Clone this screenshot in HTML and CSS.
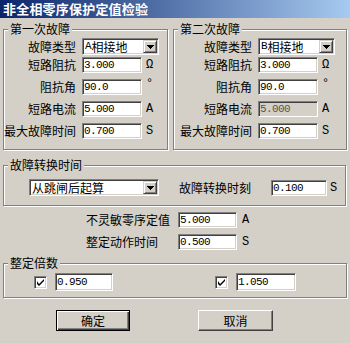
FILE: index.html
```html
<!DOCTYPE html>
<html lang="zh-CN">
<head>
<meta charset="utf-8">
<title>非全相零序保护定值检验</title>
<link rel="stylesheet" href="styles.css">
</head>
<body>
<div class="titlebar">非全相零序保护定值检验</div>

<div class="top">
  <fieldset class="group g1">
    <legend>第一次故障</legend>
    <div class="rows">
      <div class="row first">
        <span class="lbl">故障类型</span>
        <div class="combo"><span class="ctext"><span class="mono">A</span>相接地</span><span class="cbtn"><svg width="7" height="4" viewBox="0 0 7 4"><path d="M0 0h7L3.5 4z"/></svg></span></div>
      </div>
      <div class="row"><span class="lbl">短路阻抗</span><span class="edit">3.000</span><span class="unit">Ω</span></div>
      <div class="row"><span class="lbl">阻抗角</span><span class="edit">90.0</span><span class="unit deg">°</span></div>
      <div class="row"><span class="lbl">短路电流</span><span class="edit">5.000</span><span class="unit">A</span></div>
      <div class="row"><span class="lbl">最大故障时间</span><span class="edit">0.700</span><span class="unit">S</span></div>
    </div>
  </fieldset>

  <fieldset class="group g2">
    <legend>第二次故障</legend>
    <div class="rows">
      <div class="row first">
        <span class="lbl">故障类型</span>
        <div class="combo"><span class="ctext"><span class="mono">B</span>相接地</span><span class="cbtn"><svg width="7" height="4" viewBox="0 0 7 4"><path d="M0 0h7L3.5 4z"/></svg></span></div>
      </div>
      <div class="row"><span class="lbl">短路阻抗</span><span class="edit">3.000</span><span class="unit">Ω</span></div>
      <div class="row"><span class="lbl">阻抗角</span><span class="edit">90.0</span><span class="unit deg">°</span></div>
      <div class="row"><span class="lbl">短路电流</span><span class="edit disabled">5.000</span><span class="unit">A</span></div>
      <div class="row"><span class="lbl">最大故障时间</span><span class="edit">0.700</span><span class="unit">S</span></div>
    </div>
  </fieldset>
</div>

<fieldset class="group g3">
  <legend>故障转换时间</legend>
  <div class="line">
    <div class="combo wide"><span class="ctext">从跳闸后起算</span><span class="cbtn"><svg width="7" height="4" viewBox="0 0 7 4"><path d="M0 0h7L3.5 4z"/></svg></span></div>
    <span class="lbl3">故障转换时刻</span>
    <span class="edit e56">0.100</span><span class="unit u3">S</span>
  </div>
</fieldset>

<div class="plain">
  <div class="prow"><span class="plbl">不灵敏零序定值</span><span class="edit e59">5.000</span><span class="unit u5">A</span></div>
  <div class="prow"><span class="plbl">整定动作时间</span><span class="edit e59">0.500</span><span class="unit u5">S</span></div>
</div>

<fieldset class="group g4">
  <legend>整定倍数</legend>
  <div class="line">
    <span class="chk"><svg width="7" height="7" viewBox="0 0 7 7"><path d="M0 2v3l2 2 5-5V0L2 5z"/></svg></span>
    <span class="edit tall e58">0.950</span>
    <span class="chk c2"><svg width="7" height="7" viewBox="0 0 7 7"><path d="M0 2v3l2 2 5-5V0L2 5z"/></svg></span>
    <span class="edit tall e60">1.050</span>
  </div>
</fieldset>

<div class="buttons">
  <button class="btn default">确定</button>
  <button class="btn cancel">取消</button>
</div>
</body>
</html>
```

FILE: styles.css
```css
* { box-sizing: border-box; }
html, body { margin: 0; padding: 0; }
body {
  width: 350px;
  height: 343px;
  overflow: hidden;
  background: #d4d0c8;
  font-family: "Noto Sans CJK SC", "Noto Sans CJK JP", sans-serif;
  font-size: 12px;
  line-height: 14px;
  color: #000;
}

.titlebar {
  height: 18px;
  line-height: 18px;
  padding-left: 3px;
  color: #fff;
  font-weight: bold;
  font-size: 13px;
  letter-spacing: 0.2px;
  background: linear-gradient(to right, #0a246a, #a6caf0);
}

.mono {
  font-family: "Liberation Mono", monospace;
  font-size: 11px;
  letter-spacing: -0.6px;
  margin-right: 0.6px;
}

/* etched group boxes */
.group {
  margin: 0;
  padding: 0;
  min-width: 0;
  border: 1px solid #808080;
  box-shadow: inset 1px 1px 0 #fff, 1px 1px 0 #fff;
}
.group > legend {
  margin-left: 4px;
  padding: 0 2px;
  line-height: 14px;
  background: #d4d0c8;
}

.top {
  display: flex;
  gap: 5px;
  padding-left: 3px;
  margin-top: 4px;
}
.g1 { width: 165px; }
.g2 { width: 174px; }

.rows {
  display: flex;
  flex-direction: column;
  gap: 6px;
  padding: 2px 0 10px 0;
}
.g2 .rows { padding-left: 6px; }

.row {
  display: flex;
  align-items: center;
  height: 16px;
}
.row.first { height: 17px; margin-bottom: -4px; }

.lbl {
  width: 72px;
  margin-right: 6px;
  display: flex;
  justify-content: flex-end;
  white-space: nowrap;
}

/* sunken edit */
.edit {
  display: block;
  width: 60px;
  height: 16px;
  border: 1px solid;
  border-color: #808080 #fff #fff #808080;
  box-shadow: inset 1px 1px 0 #404040, inset -1px -1px 0 #d4d0c8;
  background: #fff;
  padding: 0 1px;
  font-family: "Liberation Mono", monospace;
  font-size: 11px;
  letter-spacing: -0.6px;
  line-height: 14px;
  white-space: nowrap;
}
.edit.disabled { background: #d4d0c8; color: #555; }
.edit.tall { height: 18px; line-height: 16px; }
.e56 { width: 56px; }
.e58 { width: 58px; }
.e59 { width: 59px; }
.e60 { width: 60px; }

.unit {
  margin-left: 4px;
  font-family: "Liberation Mono", monospace;
  font-size: 12px;
  line-height: 14px;
}
.unit.deg { align-self: flex-start; line-height: 10px; font-size: 12px; }

/* combo box */
.combo {
  display: flex;
  width: 77px;
  height: 17px;
  border: 1px solid;
  border-color: #808080 #fff #fff #808080;
  box-shadow: inset 1px 1px 0 #404040, inset -1px -1px 0 #d4d0c8;
  background: #fff;
  padding: 1px;
}
.combo.wide { width: 130px; margin-right: 20px; }
.ctext {
  flex: 1;
  display: flex;
  align-items: center;
  padding-left: 1px;
  height: 13px;
  line-height: 13px;
  white-space: nowrap;
}
.cbtn {
  flex: none;
  width: 14px;
  height: 13px;
  background: #d4d0c8;
  border: 1px solid;
  border-color: #d4d0c8 #404040 #404040 #d4d0c8;
  box-shadow: inset 1px 1px 0 #fff, inset -1px -1px 0 #808080;
  display: flex;
  align-items: center;
  justify-content: center;
}
.cbtn svg { display: block; fill: #000; shape-rendering: crispEdges; }

/* group 3 */
.g3 { width: 343px; margin: 8px 0 0 3px; }
.g3 .line {
  display: flex;
  align-items: center;
  box-sizing: content-box;
  height: 17px;
  padding: 7px 0 9px 25px;
}
.lbl3 { width: 72px; margin-right: 20px; white-space: nowrap; }
.u3 { margin-left: 3px; }

/* plain rows */
.plain {
  display: flex;
  flex-direction: column;
  gap: 6px;
  padding-left: 86px;
  margin-top: 6px;
}
.prow { display: flex; align-items: center; height: 16px; }
.plbl { width: 92px; white-space: nowrap; }
.u5 { margin-left: 5px; }

/* group 4 */
.g4 { width: 344px; margin: 6px 0 0 3px; }
.g4 .line {
  display: flex;
  align-items: center;
  box-sizing: content-box;
  height: 18px;
  padding: 3px 0 6px 30px;
}
.chk {
  display: flex;
  align-items: center;
  justify-content: center;
  width: 13px;
  height: 13px;
  margin-right: 8px;
  border: 1px solid;
  border-color: #808080 #fff #fff #808080;
  box-shadow: inset 1px 1px 0 #404040, inset -1px -1px 0 #d4d0c8;
  background: #fff;
}
.chk svg { display: block; fill: #000; }
.chk.c2 { margin-left: 102px; }

/* buttons */
.buttons {
  display: flex;
  gap: 68px;
  padding-left: 56px;
  margin-top: 12px;
}
.btn {
  height: 21px;
  padding: 0;
  font-family: "Noto Sans CJK SC", "Noto Sans CJK JP", sans-serif;
  font-size: 12px;
  line-height: 14px;
  color: #000;
  background: #d4d0c8;
  border: 1px solid;
  border-radius: 0;
}
.btn.default {
  width: 74px;
  border-color: #000;
  box-shadow: inset 1px 1px 0 #fff, inset -1px -1px 0 #404040, inset -2px -2px 0 #808080;
}
.btn.cancel {
  width: 75px;
  border-color: #fff #404040 #404040 #fff;
  box-shadow: inset -1px -1px 0 #808080, inset 1px 1px 0 #d4d0c8;
}
```
